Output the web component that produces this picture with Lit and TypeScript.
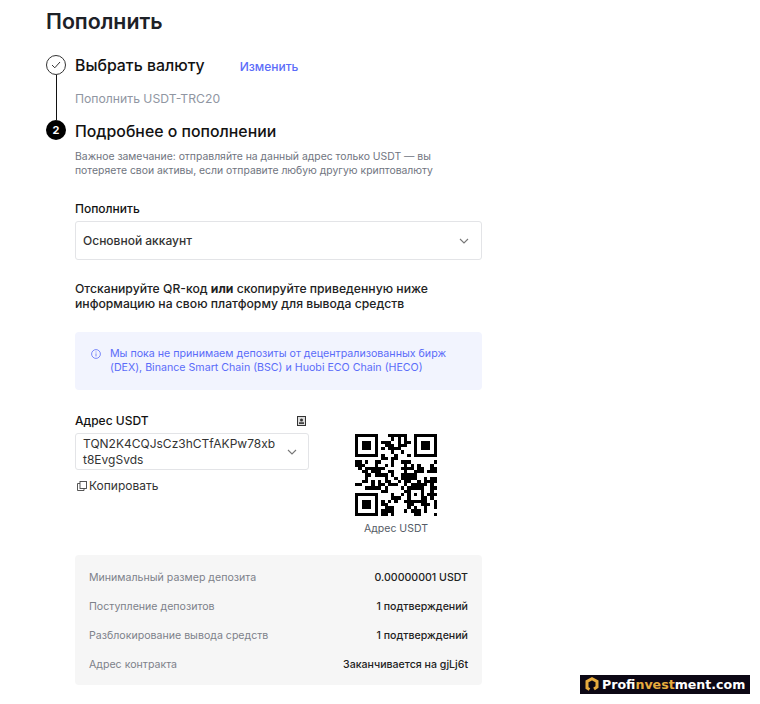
import { css, html, LitElement, svg } from "lit";
import { customElement } from "lit/decorators.js";

const QR_SIZE = 25;

function isReserved(x: number, y: number) {
  const inBox = (ox: number, oy: number, w: number) => x >= ox && x < ox + w && y >= oy && y < oy + w;
  return inBox(0, 0, 8) || inBox(17, 0, 8) || inBox(0, 17, 8) || inBox(16, 16, 5);
}

// pseudo random filler for the data area of the code
function qrCells() {
  const cells: [number, number][] = [];
  let seed = 77;
  for (let y = 0; y < QR_SIZE; y++) {
    for (let x = 0; x < QR_SIZE; x++) {
      if (isReserved(x, y)) continue;
      seed = (seed * 1103515245 + 12345) & 0x7fffffff;
      if ((seed >> 16) % 100 < 50) cells.push([x, y]);
    }
  }
  return cells;
}

const rows = [
  ["Минимальный размер депозита", "0.00000001 USDT"],
  ["Поступление депозитов", "1 подтверждений"],
  ["Разблокирование вывода средств", "1 подтверждений"],
  ["Адрес контракта", "Заканчивается на gjLj6t"],
];

@customElement("app-root")
export class AppRoot extends LitElement {
  static override styles = css`
    :host {
      display: block;
      position: relative;
      width: 760px;
      height: 704px;
      overflow: hidden;
      background: #fff;
      color: #121212;
      font-family: Inter, "Noto Sans", sans-serif;
    }

    .page {
      padding: 8px 0 0 46px;
      width: 436px;
    }

    h1 {
      margin: 0;
      font-size: 21.3px;
      line-height: 26px;
      font-weight: 600;
      color: #1d2127;
    }

    .steps {
      display: grid;
      grid-template-columns: 20px 1fr;
      column-gap: 9px;
      margin-top: 21px;
    }

    .rail {
      display: flex;
      flex-direction: column;
      align-items: center;
    }

    .line {
      flex: 1;
      width: 1px;
      background: #121212;
    }

    .dot {
      box-sizing: border-box;
      width: 20px;
      height: 20px;
      flex: none;
      border-radius: 50%;
      display: flex;
      align-items: center;
      justify-content: center;
    }

    .dot.done {
      border: 1px solid #333;
    }

    .dot.now {
      background: #000;
      color: #fff;
      font-size: 11px;
      font-weight: 700;
    }

    .step-head {
      display: flex;
      align-items: center;
      height: 20px;
      font-size: 15.85px;
      font-weight: 500;
      white-space: nowrap;
    }

    .step-head.second {
      padding-top: 1px;
    }

    .change {
      margin-left: 35px;
      font-size: 12px;
      font-weight: 500;
      color: #5b6cf9;
      position: relative;
      top: 1px;
    }

    .picked {
      margin: 16px 0 0;
      padding-bottom: 13px;
      font-size: 12.2px;
      line-height: 16px;
      color: #9096a2;
    }

    .note {
      margin: 9px 0 0;
      font-size: 10.4px;
      line-height: 14px;
      color: #6f7480;
    }

    .label {
      margin-top: 23px;
      font-size: 12px;
      line-height: 16px;
      font-weight: 500;
    }

    .select {
      box-sizing: border-box;
      display: flex;
      align-items: center;
      justify-content: space-between;
      height: 39px;
      margin-top: 4px;
      padding: 0 12px 0 7px;
      border: 1px solid #e3e4e7;
      border-radius: 3px;
      font-size: 12px;
      font-weight: 500;
      color: #333;
    }

    .scan {
      margin: 21px 0 0;
      font-size: 12.2px;
      line-height: 15px;
      font-weight: 500;
      color: #222;
    }

    .scan b {
      font-weight: 700;
    }

    .alert {
      display: flex;
      gap: 9px;
      margin-top: 21px;
      padding: 15px 16px 15px;
      background: #f2f4fe;
      border-radius: 4px;
      font-size: 10.65px;
      line-height: 14px;
      color: #5b6cf9;
    }

    .alert svg {
      flex: none;
      margin-top: 2px;
    }

    .address {
      display: flex;
      margin-top: 23px;
    }

    .address-left {
      width: 234px;
    }

    .address-head {
      display: flex;
      align-items: center;
      justify-content: space-between;
      padding-right: 3px;
      font-size: 12px;
      line-height: 16px;
      font-weight: 500;
    }

    .address-box {
      box-sizing: border-box;
      display: flex;
      align-items: center;
      justify-content: space-between;
      height: 37px;
      margin-top: 4px;
      padding: 0 11px 0 7px;
      border: 1px solid #e3e4e7;
      border-radius: 3px;
      font-size: 12px;
      line-height: 16px;
      color: #333;
    }

    .address-box span {
      width: 194px;
      overflow-wrap: anywhere;
    }

    .copy {
      display: flex;
      align-items: center;
      gap: 2px;
      margin: 8px 0 0 2px;
      font-size: 12px;
      line-height: 16px;
      color: #333;
    }

    .qr-wrap {
      display: flex;
      flex-direction: column;
      align-items: center;
      margin: 21px 0 0 46px;
      font-size: 10.5px;
      color: #555b66;
    }

    .qr-wrap span {
      margin-top: 6px;
    }

    .facts {
      display: flex;
      flex-direction: column;
      gap: 15px;
      margin-top: 20px;
      padding: 16px 14px 13px;
      background: #f6f6f6;
      border-radius: 4px;
      font-size: 10.6px;
      line-height: 14px;
    }

    .fact {
      display: flex;
      justify-content: space-between;
    }

    .fact span:first-child {
      color: #7d818a;
    }

    .fact span:last-child {
      color: #222;
      font-weight: 500;
    }

    .mark {
      position: absolute;
      left: 580px;
      top: 675px;
      width: 170px;
      height: 19px;
      display: flex;
      align-items: center;
      gap: 3px;
      padding-left: 5px;
      box-sizing: border-box;
      background: #0c0714;
      color: #fff;
      font-family: "DejaVu Sans", sans-serif;
      font-size: 12.6px;
      font-weight: 700;
      white-space: nowrap;
    }

    .mark em {
      font-style: normal;
      color: #e6ab3e;
    }
  `;

  private renderChevron() {
    return svg`<svg width="10" height="6" viewBox="0 0 10 6" fill="none" stroke="#777" stroke-width="1.1"><path d="M1 1l4 4 4-4"></path></svg>`;
  }

  private renderFinder(x: number, y: number) {
    return svg`
      <rect x="${x}" y="${y}" width="7" height="7" fill="#000"></rect>
      <rect x="${x + 1}" y="${y + 1}" width="5" height="5" fill="#fff"></rect>
      <rect x="${x + 2}" y="${y + 2}" width="3" height="3" fill="#000"></rect>
    `;
  }

  private renderQr() {
    return html`<svg width="82" height="82" viewBox="0 0 25 25" shape-rendering="crispEdges">
      ${this.renderFinder(0, 0)} ${this.renderFinder(18, 0)} ${this.renderFinder(0, 18)}
      <rect x="16" y="16" width="5" height="5" fill="#000"></rect>
      <rect x="17" y="17" width="3" height="3" fill="#fff"></rect>
      <rect x="18" y="18" width="1" height="1" fill="#000"></rect>
      ${qrCells().map(([x, y]) => svg`<rect x="${x}" y="${y}" width="1" height="1" fill="#000"></rect>`)}
    </svg>`;
  }

  override render() {
    return html`
      <div class="page">
        <h1>Пополнить</h1>
        <div class="steps">
          <div class="rail">
            <div class="dot done">
              <svg width="10" height="8" viewBox="0 0 10 8" fill="none" stroke="#333" stroke-width="1">
                <path d="M1 4l2.8 2.8L9 1"></path>
              </svg>
            </div>
            <div class="line"></div>
          </div>
          <div>
            <div class="step-head">Выбрать валюту <span class="change">Изменить</span></div>
            <p class="picked">Пополнить USDT-TRC20</p>
          </div>
          <div class="rail"><div class="dot now">2</div></div>
          <div>
            <div class="step-head second">Подробнее о пополнении</div>
            <p class="note">
              Важное замечание: отправляйте на данный адрес только USDT — вы<br />
              потеряете свои активы, если отправите любую другую криптовалюту
            </p>
            <div class="label">Пополнить</div>
            <div class="select">Основной аккаунт ${this.renderChevron()}</div>
            <p class="scan">
              Отсканируйте QR-код <b>или</b> скопируйте приведенную ниже<br />
              информацию на свою платформу для вывода средств
            </p>
            <div class="alert">
              <svg width="10" height="10" viewBox="0 0 10 10" fill="none" stroke="#5b6cf9" stroke-width="0.8">
                <circle cx="5" cy="5" r="4.4"></circle>
                <path d="M5 4.4v3M5 2.5v1"></path>
              </svg>
              <div>
                Мы пока не принимаем депозиты от децентрализованных бирж<br />
                (DEX), Binance Smart Chain (BSC) и Huobi ECO Chain (HECO)
              </div>
            </div>
            <div class="address">
              <div class="address-left">
                <div class="address-head">
                  Адрес USDT
                  <svg width="9" height="10" viewBox="0 0 9 10">
                    <rect x="0.5" y="0.5" width="8" height="9" fill="#ddd" stroke="#333"></rect>
                    <circle cx="4.5" cy="4" r="1.5" fill="#333"></circle>
                    <rect x="2" y="6.3" width="5" height="1.6" fill="#333"></rect>
                  </svg>
                </div>
                <div class="address-box">
                  <span>TQN2K4CQJsCz3hCTfAKPw78xbt8EvgSvds</span>
                  ${this.renderChevron()}
                </div>
                <div class="copy">
                  <svg width="10" height="10" viewBox="0 0 10 10" fill="none" stroke="#444" stroke-width="0.9">
                    <rect x="3" y="0.5" width="6.5" height="7"></rect>
                    <path d="M3 2.5H0.5v7h6.5V7.5"></path>
                  </svg>
                  Копировать
                </div>
              </div>
              <div class="qr-wrap">
                ${this.renderQr()}
                <span>Адрес USDT</span>
              </div>
            </div>
            <div class="facts">
              ${rows.map(
                ([name, value]) => html`<div class="fact"><span>${name}</span><span>${value}</span></div>`,
              )}
            </div>
          </div>
        </div>
      </div>
      <div class="mark">
        <svg width="14" height="15" viewBox="0 0 14 15" fill="none" stroke="#e6ab3e" stroke-width="3">
          <path d="M4.500 12.500L2 11V4.500L7 1.800l5 2.700V10L9 12"></path>
        </svg>
        <span>Prof<em>invest</em>ment.com</span>
      </div>
    `;
  }
}

declare global {
  interface HTMLElementTagNameMap {
    "app-root": AppRoot;
  }
}
